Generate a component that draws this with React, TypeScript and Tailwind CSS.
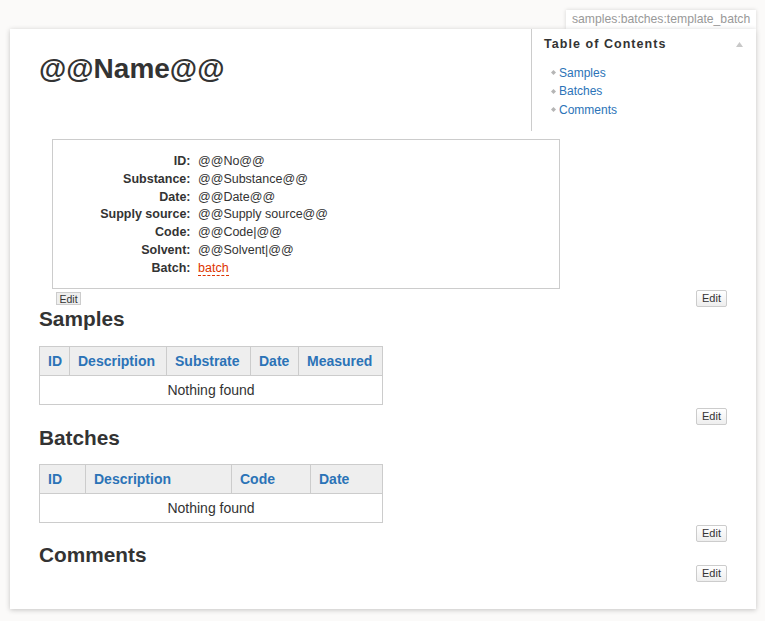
import React from "react";

function EditBtn({ className = "" }: { className?: string }) {
  return (
    <button
      type="button"
      className={
        "flex h-[17px] w-[31px] items-center justify-center rounded-[2px] border border-[#ccc] bg-[#eee] bg-gradient-to-b from-white to-[#eee] p-0 text-[11px] leading-none text-[#333] " +
        className
      }
    >
      Edit
    </button>
  );
}

function Diamond() {
  return (
    <svg width="5" height="5" viewBox="0 0 5 5" className="mr-[3px] ml-[7px] shrink-0">
      <path d="M2.5 0 L5 2.5 L2.5 5 L0 2.5 Z" fill="#b5b5b5" />
    </svg>
  );
}

export default function App() {
  const rows: [string, string][] = [
    ["ID:", "@@No@@"],
    ["Substance:", "@@Substance@@"],
    ["Date:", "@@Date@@"],
    ["Supply source:", "@@Supply source@@"],
    ["Code:", "@@Code|@@"],
    ["Solvent:", "@@Solvent|@@"],
  ];
  const thCls =
    "h-[29px] border border-[#ccc] bg-[#eee] px-[8px] py-0 text-left font-bold text-[#2b73b7]";
  return (
    <div className="min-h-screen bg-[#fbfaf9] pt-[10px] text-[#333] [font-family:'Liberation_Sans',Arial,sans-serif]">
      <div className="ml-[10px] flex w-[746px] justify-end">
        <div className="h-[19px] w-[190px] bg-white pl-[6px] text-[12.2px] leading-[19px] text-[#999] shadow-[0_0_4px_rgba(0,0,0,0.15)]">
          samples:batches:template_batch
        </div>
      </div>
      <div className="relative z-10 ml-[10px] w-[746px] bg-white pb-[27px] shadow-[0_1px_5px_rgba(0,0,0,0.22)]">
        <div className="flex">
          <div className="flex-1 pl-[29px] pt-[23px]">
            <h1 className="text-[28px] font-bold leading-[34px]">@@Name@@</h1>
          </div>
          <div className="w-[225px] border-l border-[#ccc] pb-[12px] pl-[12px] pr-[13px] pt-[6px]">
            <div className="flex h-[18px] items-center justify-between">
              <span className="text-[12.5px] font-bold leading-[18px] tracking-[1.05px]">
                Table of Contents
              </span>
              <svg width="7" height="5" viewBox="0 0 7 5">
                <path d="M3.5 0 L7 5 L0 5 Z" fill="#c8c8c8" />
              </svg>
            </div>
            <ul className="mt-[10.5px] text-[12px] leading-[18.5px] text-[#2b73b7]">
              {["Samples", "Batches", "Comments"].map((t) => (
                <li key={t} className="flex h-[18.5px] items-center">
                  <Diamond />
                  <span>{t}</span>
                </li>
              ))}
            </ul>
          </div>
        </div>

        <div className="px-[29px]">
          <div className="ml-[13px] mt-[8px] w-[508px] border border-[#ccc] pb-[11px] pt-[13px]">
            <div className="grid grid-cols-[137.5px_1fr] gap-x-[7.5px] text-[12.5px] leading-[17.75px]">
              {rows.map(([k, v]) => (
                <React.Fragment key={k}>
                  <div className="text-right font-bold">{k}</div>
                  <div>{v}</div>
                </React.Fragment>
              ))}
              <div className="text-right font-bold">Batch:</div>
              <div>
                <span className="border-b border-dashed border-[#dd3300] text-[#dd3300]">batch</span>
              </div>
            </div>
          </div>

          <div className="mt-[1px] flex items-start justify-between">
            <button
              type="button"
              className="ml-[17px] mt-[2px] flex h-[13px] w-[25px] items-center justify-center border border-[#ccc] bg-[#eee] p-0 text-[10.5px] leading-none text-[#333]"
            >
              Edit
            </button>
            <EditBtn />
          </div>

          <h2 className="mt-[2px] text-[20.8px] font-bold leading-[20px]">Samples</h2>
          <table className="mt-[17px] w-[343px] table-fixed border-collapse text-[14px]">
            <colgroup>
              <col className="w-[30px]" />
              <col className="w-[97px]" />
              <col className="w-[84px]" />
              <col className="w-[48px]" />
              <col className="w-[84px]" />
            </colgroup>
            <thead>
              <tr>
                <th className={thCls}>ID</th>
                <th className={thCls}>Description</th>
                <th className={thCls}>Substrate</th>
                <th className={thCls}>Date</th>
                <th className={thCls}>Measured</th>
              </tr>
            </thead>
            <tbody>
              <tr>
                <td colSpan={5} className="h-[29px] border border-[#ccc] p-0 text-center">
                  Nothing found
                </td>
              </tr>
            </tbody>
          </table>
          <div className="mt-[3px] flex justify-end">
            <EditBtn />
          </div>

          <h2 className="mt-[2.5px] text-[20.8px] font-bold leading-[20px]">Batches</h2>
          <table className="mt-[16.5px] w-[343px] table-fixed border-collapse text-[14px]">
            <colgroup>
              <col className="w-[46px]" />
              <col className="w-[146px]" />
              <col className="w-[79px]" />
              <col className="w-[72px]" />
            </colgroup>
            <thead>
              <tr>
                <th className={thCls}>ID</th>
                <th className={thCls}>Description</th>
                <th className={thCls}>Code</th>
                <th className={thCls}>Date</th>
              </tr>
            </thead>
            <tbody>
              <tr>
                <td colSpan={4} className="h-[29px] border border-[#ccc] p-0 text-center">
                  Nothing found
                </td>
              </tr>
            </tbody>
          </table>
          <div className="mt-[2px] flex justify-end">
            <EditBtn />
          </div>

          <h2 className="mt-[3px] text-[20.8px] font-bold leading-[20px]">Comments</h2>
          <div className="flex justify-end">
            <EditBtn />
          </div>
        </div>
      </div>
    </div>
  );
}
